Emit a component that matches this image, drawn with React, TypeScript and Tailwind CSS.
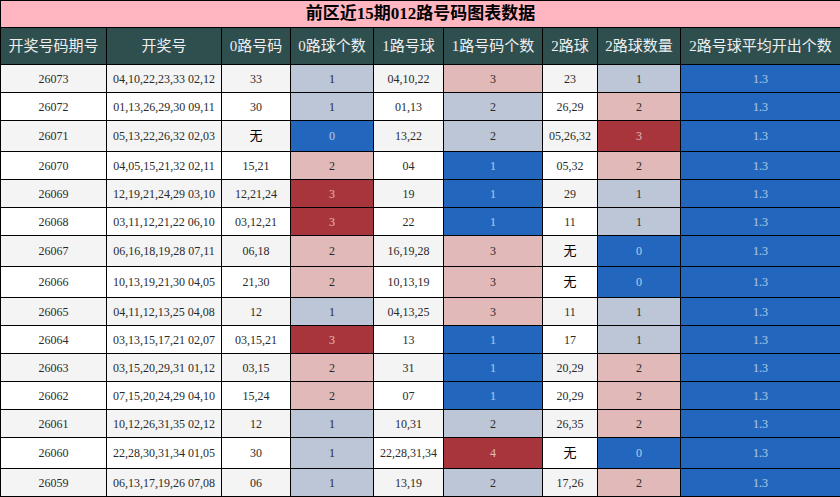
const rows: [string, string, string, number, string, number, string, number][] = [
  ["26073", "04,10,22,23,33 02,12", "33", 1, "04,10,22", 3, "23", 1],
  ["26072", "01,13,26,29,30 09,11", "30", 1, "01,13", 2, "26,29", 2],
  ["26071", "05,13,22,26,32 02,03", "无", 0, "13,22", 2, "05,26,32", 3],
  ["26070", "04,05,15,21,32 02,11", "15,21", 2, "04", 1, "05,32", 2],
  ["26069", "12,19,21,24,29 03,10", "12,21,24", 3, "19", 1, "29", 1],
  ["26068", "03,11,12,21,22 06,10", "03,12,21", 3, "22", 1, "11", 1],
  ["26067", "06,16,18,19,28 07,11", "06,18", 2, "16,19,28", 3, "无", 0],
  ["26066", "10,13,19,21,30 04,05", "21,30", 2, "10,13,19", 3, "无", 0],
  ["26065", "04,11,12,13,25 04,08", "12", 1, "04,13,25", 3, "11", 1],
  ["26064", "03,13,15,17,21 02,07", "03,15,21", 3, "13", 1, "17", 1],
  ["26063", "03,15,20,29,31 01,12", "03,15", 2, "31", 1, "20,29", 2],
  ["26062", "07,15,20,24,29 04,10", "15,24", 2, "07", 1, "20,29", 2],
  ["26061", "10,12,26,31,35 02,12", "12", 1, "10,31", 2, "26,35", 2],
  ["26060", "22,28,30,31,34 01,05", "30", 1, "22,28,31,34", 4, "无", 0],
  ["26059", "06,13,17,19,26 07,08", "06", 1, "13,19", 2, "17,26", 2],
];

const headers = ["开奖号码期号", "开奖号", "0路号码", "0路球个数", "1路号球", "1路号码个数", "2路球", "2路球数量", "2路号球平均开出个数"];
const widths = ["w-[106px]", "w-[115px]", "w-[69px]", "w-[83px]", "w-[70px]", "w-[99px]", "w-[55px]", "w-[83px]", "w-[160px]"];

// heat level -> cell colour (0 = lowest in the column)
const heat = [
  "bg-[#2267bd] text-white/65",
  "bg-[#bdc6d6] text-[#2a2a2a]",
  "bg-[#e0b9b8] text-[#2a2a2a]",
  "bg-[#a8353b] text-white/65",
];

const Heat = ({ level, children }: { level: number; children: React.ReactNode }) => (
  <td className={`border border-black ${heat[level]}`}>{children}</td>
);

export default function App() {
  return (
    <div className="w-[840px] h-[497px] bg-white font-['Liberation_Serif','Noto_Sans_CJK_SC',serif]">
      <table className="w-[840px] table-fixed border-collapse text-center text-[12px] leading-[14px] text-[#2a2a2a]">
        <colgroup>
          {widths.map((w, i) => (
            <col key={i} className={w} />
          ))}
        </colgroup>
        <thead>
          <tr className="h-[27px]">
            <td colSpan={9} className="border border-black bg-[#ffb6c1] text-[17px] font-bold text-black">
              前区近15期012路号码图表数据
            </td>
          </tr>
          <tr className="h-[37px] bg-[#2f4f4f]">
            {headers.map((h) => (
              <th key={h} className="border border-black text-[15px] font-normal text-[#eee]">
                {h}
              </th>
            ))}
          </tr>
        </thead>
        <tbody>
          {rows.map((r, i) => {
            const tall = r[2] === "无" || r[6] === "无";
            return (
              <tr key={r[0]} className={`${tall ? "h-[31px]" : "h-[28px]"} ${i % 2 === 0 ? "bg-[#f4f4f4]" : "bg-white"}`}>
                <td className="border border-black">{r[0]}</td>
                <td className="border border-black">{r[1]}</td>
                <td className={`border border-black ${r[2] === "无" ? "text-[13px] text-black" : ""}`}>{r[2]}</td>
                <Heat level={r[3]}>{r[3]}</Heat>
                <td className="border border-black">{r[4]}</td>
                <Heat level={r[5] - 1}>{r[5]}</Heat>
                <td className={`border border-black ${r[6] === "无" ? "text-[13px] text-black" : ""}`}>{r[6]}</td>
                <Heat level={r[7]}>{r[7]}</Heat>
                <Heat level={0}>1.3</Heat>
              </tr>
            );
          })}
        </tbody>
      </table>
    </div>
  );
}
